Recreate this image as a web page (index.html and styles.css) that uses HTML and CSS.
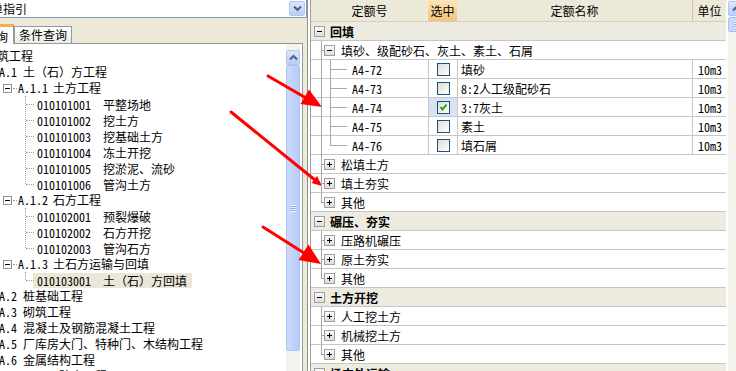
FILE: index.html
```html
<!DOCTYPE html>
<html lang="zh-CN">
<head>
<meta charset="utf-8">
<title>定额指引</title>
<link rel="stylesheet" href="styles.css">
</head>
<body>
<div class="app">
  <div class="left">
    <div class="combo">
      <span class="combo-text">单指引</span>
      <span class="xbtn combo-btn"><svg width="9" height="7" viewBox="0 0 9 7"><path d="M1 1.5 L4.5 5 L8 1.5" fill="none" stroke="#4D6185" stroke-width="2"/></svg></span>
    </div>
    <div class="tabs">
      <div class="tab active">询</div>
      <div class="tab">条件查询</div>
    </div>
    <div class="treebox">
      <div class="tree">
        <div class="node n0">筑工程</div>
        <div class="node n1"><span class="num">A.1</span>土（石）方工程</div>
        <div class="node n2"><span class="tpm"></span><span class="num2">A.1.1</span>土方工程</div>
        <div class="kids">
          <div class="leaf"><span class="txt"><span class="code">010101001</span>平整场地</span></div>
          <div class="leaf"><span class="txt"><span class="code">010101002</span>挖土方</span></div>
          <div class="leaf"><span class="txt"><span class="code">010101003</span>挖基础土方</span></div>
          <div class="leaf"><span class="txt"><span class="code">010101004</span>冻土开挖</span></div>
          <div class="leaf"><span class="txt"><span class="code">010101005</span>挖淤泥、流砂</span></div>
          <div class="leaf"><span class="txt"><span class="code">010101006</span>管沟土方</span></div>
        </div>
        <div class="node n2"><span class="tpm"></span><span class="num2">A.1.2</span>石方工程</div>
        <div class="kids">
          <div class="leaf"><span class="txt"><span class="code">010102001</span>预裂爆破</span></div>
          <div class="leaf"><span class="txt"><span class="code">010102002</span>石方开挖</span></div>
          <div class="leaf"><span class="txt"><span class="code">010102003</span>管沟石方</span></div>
        </div>
        <div class="node n2"><span class="tpm"></span><span class="num2">A.1.3</span>土石方运输与回填</div>
        <div class="kids">
          <div class="leaf sel"><span class="txt"><span class="code">010103001</span>土（石）方回填</span></div>
        </div>
        <div class="node n1"><span class="num">A.2</span>桩基础工程</div>
        <div class="node n1"><span class="num">A.3</span>砌筑工程</div>
        <div class="node n1"><span class="num">A.4</span>混凝土及钢筋混凝土工程</div>
        <div class="node n1"><span class="num">A.5</span>厂库房大门、特种门、木结构工程</div>
        <div class="node n1"><span class="num">A.6</span>金属结构工程</div>
        <div class="node n1"><span class="num">A.7</span>屋面及防水工程</div>
      </div>
      <div class="vscroll">
        <div class="xbtn sb-btn"><svg width="9" height="7" viewBox="0 0 9 7"><path d="M1 5.5 L4.5 2 L8 5.5" fill="none" stroke="#4D6185" stroke-width="2"/></svg></div>
        <div class="thumb tall"><span class="grip"></span></div>
        <div class="track"></div>
      </div>
    </div>
  </div>

  <div class="right">
    <div class="grid">
      <div class="ghead">
        <div class="hc w1">定额号</div>
        <div class="hc w2 hsel">选中</div>
        <div class="hc w3">定额名称</div>
        <div class="hc w4 hsep">单位</div>
      </div>

      <div class="grow group"><span class="pm"></span>回填</div>
      <div class="sec">
        <div class="grow l1"><span class="pm"></span>填砂、级配砂石、灰土、素土、石屑</div>
        <div class="sub">
          <div class="grow leafrow"><div class="w1 c1">A4-72</div><div class="w2 c2"><span class="cb"></span></div><div class="w3 c3">填砂</div><div class="w4 c4">10m3</div></div>
          <div class="grow leafrow"><div class="w1 c1">A4-73</div><div class="w2 c2"><span class="cb"></span></div><div class="w3 c3">8:2人工级配砂石</div><div class="w4 c4">10m3</div></div>
          <div class="grow leafrow"><div class="w1 c1">A4-74</div><div class="w2 c2 cur"><span class="cb"><svg width="11" height="11" viewBox="0 0 11 11"><path d="M2.5 5 L4.5 7.5 L8.5 2.5" fill="none" stroke="#21A121" stroke-width="2"/></svg></span></div><div class="w3 c3">3:7灰土</div><div class="w4 c4">10m3</div></div>
          <div class="grow leafrow"><div class="w1 c1">A4-75</div><div class="w2 c2"><span class="cb"></span></div><div class="w3 c3">素土</div><div class="w4 c4">10m3</div></div>
          <div class="grow leafrow"><div class="w1 c1">A4-76</div><div class="w2 c2"><span class="cb"></span></div><div class="w3 c3">填石屑</div><div class="w4 c4">10m3</div></div>
        </div>
        <div class="grow l1"><span class="pm plus"></span>松填土方</div>
        <div class="grow l1"><span class="pm plus"></span>填土夯实</div>
        <div class="grow l1"><span class="pm plus"></span>其他</div>
      </div>

      <div class="grow group"><span class="pm"></span>碾压、夯实</div>
      <div class="sec">
        <div class="grow l1"><span class="pm plus"></span>压路机碾压</div>
        <div class="grow l1"><span class="pm plus"></span>原土夯实</div>
        <div class="grow l1"><span class="pm plus"></span>其他</div>
      </div>

      <div class="grow group"><span class="pm"></span>土方开挖</div>
      <div class="sec">
        <div class="grow l1"><span class="pm plus"></span>人工挖土方</div>
        <div class="grow l1"><span class="pm plus"></span>机械挖土方</div>
        <div class="grow l1"><span class="pm plus"></span>其他</div>
      </div>

      <div class="grow group"><span class="pm"></span>场内外运输</div>
    </div>
    <div class="rscroll">
      <div class="xbtn sb-btn"><svg width="9" height="7" viewBox="0 0 9 7"><path d="M1 5.5 L4.5 2 L8 5.5" fill="none" stroke="#4D6185" stroke-width="2"/></svg></div>
      <div class="thumb small"><span class="grip"></span></div>
    </div>
  </div>
</div>

<svg class="arrows" width="736" height="371" viewBox="0 0 736 371">
  <g stroke="#f00" stroke-width="3" stroke-linecap="round">
    <line x1="268" y1="76" x2="306" y2="98"/>
    <line x1="231" y1="112" x2="315" y2="180"/>
    <line x1="263" y1="227" x2="304" y2="253"/>
  </g>
  <g fill="#f00">
    <polygon points="322,107 300.5,104 309,89.5"/>
    <polygon points="322,186 311.5,183 317,176"/>
    <polygon points="321,264 298.5,260 308.5,244.5"/>
  </g>
</svg>
</body>
</html>
```

FILE: styles.css
```css
* { box-sizing: border-box; }
html, body { margin: 0; padding: 0; }
body {
  width: 736px;
  height: 371px;
  overflow: hidden;
  position: relative;
  background: #ECE9D8;
  color: #000;
  font-family: "Noto Sans Mono CJK SC", "Noto Sans CJK SC", "DejaVu Sans", sans-serif;
  font-size: 12px;
}
.app { display: flex; height: 371px; }

/* ---------- left panel ---------- */
.left { width: 307px; flex-shrink: 0; display: flex; flex-direction: column; }
.combo {
  height: 18px;
  background: #fff;
  border: 1px solid #7F9DB9;
  border-left: none;
  border-top: none;
  display: flex;
  align-items: center;
  justify-content: space-between;
  padding-right: 1px;
  overflow: hidden;
}
.combo-text { margin-left: -9px; line-height: 16px; white-space: nowrap; }
.xbtn {
  display: flex;
  align-items: center;
  justify-content: center;
  background: linear-gradient(#DCE6FD, #B9CDF8);
  border: 1px solid #B3C6EE;
  border-radius: 2px;
}
.combo-btn { width: 16px; height: 15px; }

.tabs { height: 22px; margin-top: 3px; display: flex; align-items: flex-end; position: relative; z-index: 1; }
.tab {
  height: 17px;
  padding: 0 4px;
  line-height: 15px;
  border: 1px solid #919B9C;
  border-bottom: none;
  background: linear-gradient(#FFFFFF, #ECEBE6);
  white-space: nowrap;
}
.tab.active {
  width: 14px;
  height: 20px;
  padding: 0;
  text-indent: -4px;
  overflow: hidden;
  line-height: 19px;
  border-left: none;
  border-top: 3px solid #F7B045;
  background: #FCFCFE;
  margin-bottom: -1px;
}

.treebox {
  flex: 1;
  margin-right: 4px;
  background: #fff;
  border-top: 1px solid #919B9C;
  border-right: 1px solid #919B9C;
  display: flex;
  padding-right: 2px;
  min-height: 0;
}
.tree { flex: 1; padding-top: 4px; overflow: hidden; white-space: nowrap; }
.node, .leaf { height: 16px; line-height: 16px; position: relative; }
.n0 { text-indent: -3px; }
.n1 { margin-left: -1px; }
.num { display: inline-block; width: 24px; }
.n2 { padding-left: 3px; display: flex; align-items: center; }
.num2 { display: inline-block; width: 35px; }
.tpm {
  width: 9px; height: 9px;
  border: 1px solid #919191;
  background: #fff;
  position: relative;
  margin-right: 6px;
  flex-shrink: 0;
}
.tpm::before {
  content: ""; position: absolute; left: 1px; top: 3px; width: 5px; height: 1px; background: #000;
}
.n2::after {
  content: ""; position: absolute; left: 13px; top: 8px; width: 4px; border-top: 1px dotted #A0A0A0;
}
.kids { position: relative; }
.kids::before {
  content: ""; position: absolute; left: 25px; top: 0; bottom: 8px; border-left: 1px dotted #A0A0A0;
}
.leaf { padding-left: 33px; }
.leaf::before {
  content: ""; position: absolute; left: 26px; top: 8px; width: 8px; border-top: 1px dotted #A0A0A0;
}
.txt { display: inline-block; height: 15px; line-height: 15px; margin-top: 1px; padding: 0 5px 0 4px; vertical-align: top; }
.leaf.sel .txt { background: #EAE7D9; }
.code { display: inline-block; width: 66px; }

.vscroll { width: 14px; flex-shrink: 0; display: flex; flex-direction: column; padding-top: 6px; background: #F4F3EE; }
.sb-btn { height: 15px; flex-shrink: 0; }
.thumb {
  background: linear-gradient(to right, #CCDBFC, #B6CBF7);
  border: 1px solid #ADC2EE;
  border-radius: 2px;
  display: flex;
  align-items: center;
  justify-content: center;
}
.thumb.tall { height: 286px; }
.grip {
  width: 6px; height: 7px;
  background: repeating-linear-gradient(#EEF4FE 0 1px, #8DAEF2 1px 2px);
}
.track { flex: 1; }

/* ---------- right panel ---------- */
.right {
  flex: 1;
  min-width: 0;
  display: flex;
  padding-left: 2px;
  border-left: 1px solid #8F8F8F;
  background: #fff;
  overflow: hidden;
}
.grid { width: 416px; flex-shrink: 0; border-left: 1px solid #9C9C9C; background: #fff; }
.ghead { display: flex; height: 22px; background: #ECE9D8; border-bottom: 1px solid #D4D0C0; }
.hc { display: flex; align-items: center; justify-content: center; }
.w1 { width: 117px; flex-shrink: 0; }
.w2 { width: 29px; flex-shrink: 0; }
.w3 { width: 235px; flex-shrink: 0; }
.w4 { width: 34px; flex-shrink: 0; }
.hsel { background: linear-gradient(#FCE5B6, #F4C47A); }
.hsep { border-left: 1px solid #C9C5B5; }

.grow {
  height: 19px;
  border-bottom: 1px solid #C6C6C6;
  display: flex;
  align-items: center;
  position: relative;
  white-space: nowrap;
}
.group { background: #EDEBE0; padding-left: 3px; font-weight: bold; }
.l1 { padding-left: 13px; }
.pm {
  width: 11px; height: 11px;
  border: 1px solid #9E9E9E;
  background: linear-gradient(#FBFBFB, #DDDDDD);
  position: relative;
  margin-right: 6px;
  flex-shrink: 0;
}
.pm::before {
  content: ""; position: absolute; left: 2px; top: 4px; width: 5px; height: 1px; background: #000;
}
.pm.plus::after {
  content: ""; position: absolute; left: 4px; top: 2px; width: 1px; height: 5px; background: #000;
}
.group .pm { margin-right: 5px; }

.sec, .sub { position: relative; }
.sec::before {
  content: ""; position: absolute; left: 10px; top: 0; bottom: 10px; border-left: 1px solid #A8A8A8; z-index: 1;
}
.sub::before {
  content: ""; position: absolute; left: 19px; top: 0; bottom: 10px; border-left: 1px solid #A8A8A8; z-index: 1;
}
.l1::before {
  content: ""; position: absolute; left: 10px; top: 9px; width: 3px; border-top: 1px solid #A8A8A8;
}
.leafrow { align-items: stretch; }
.leafrow::before {
  content: ""; position: absolute; left: 19px; top: 9px; width: 17px; border-top: 1px solid #A8A8A8;
}
.leafrow > div { display: flex; align-items: center; }
.c1 { padding-left: 41px; }
.c2 { border-left: 1px solid #C6C6C6; justify-content: center; }
.c2.cur { background: #D8E2F3; }
.c3 { border-left: 1px solid #C6C6C6; padding-left: 3px; }
.c4 { border-left: 1px solid #C6C6C6; justify-content: flex-end; padding-right: 4px; }
.cb {
  width: 13px; height: 13px;
  border: 1px solid #1C5180;
  background: linear-gradient(135deg, #DCDCD7, #FFFFFF);
  display: flex; align-items: center; justify-content: center;
}

.rscroll { width: 17px; flex-shrink: 0; margin-left: 2px; background: #F4F3EE; display: flex; flex-direction: column; padding-top: 1px; }
.thumb.small { height: 15px; margin-top: 1px; }

/* ---------- annotation arrows ---------- */
.arrows { position: absolute; left: 0; top: 0; pointer-events: none; }
```
